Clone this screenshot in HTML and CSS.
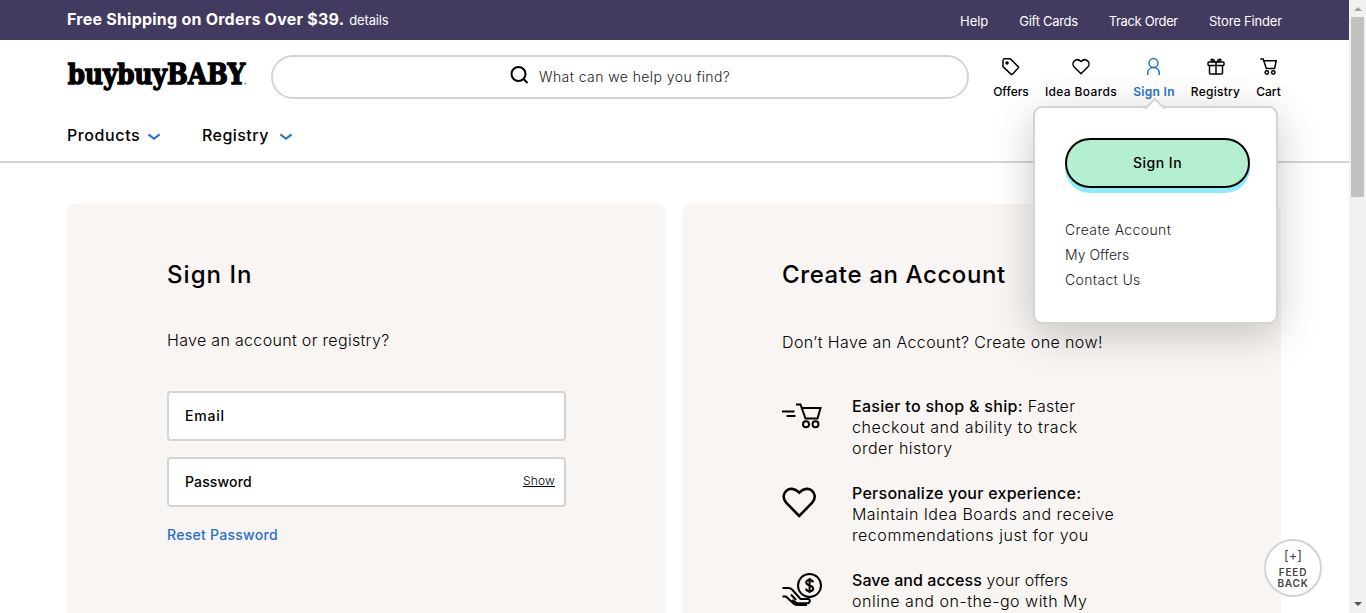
FILE: index.html
```html
<!DOCTYPE html>
<html lang="en">
<head>
<meta charset="utf-8">
<title>buybuy BABY - Sign In</title>
<link rel="stylesheet" href="styles.css">
</head>
<body>
<div class="page">
  <div class="topbar">
    <div class="promo"><strong>Free Shipping on Orders Over $39.</strong><a class="details">details</a></div>
    <nav class="toplinks"><a class="t-help">Help</a><a class="t-gift">Gift Cards</a><a class="t-track">Track Order</a><a class="t-store">Store Finder</a></nav>
  </div>
  <header class="header">
    <div class="header-row">
      <svg class="logo" width="184" height="44" viewBox="0 0 184 44"><text class="logo-text" x="1.7" y="29.200" textLength="177.500" lengthAdjust="spacingAndGlyphs">buybuyBABY</text><circle cx="179.400" cy="28.500" r="1" fill="#888"/></svg>
      <div class="search">
        <svg width="20" height="20" viewBox="0 0 20 20" fill="none" stroke="#000" stroke-width="2"><circle cx="8.500" cy="8" r="7"/><path d="M13.300 12.800l4.200 4.200"/></svg>
        <span class="search-text">What can we help you find?</span>
      </div>
      <nav class="tools">
        <a class="tool w-offers"><svg width="20" height="20" viewBox="0 0 20 20"><path d="M2.1 1.8h7.1l7.8 7.6q.9.9 0 1.8l-5.400 5.900q-.8.9-1.700 0L2 9.600V2.500"/><circle cx="6" cy="6" r="1" fill="#000"/></svg><span>Offers</span></a>
        <a class="tool w-ideas"><svg width="20" height="20" viewBox="0 0 20 20"><path d="M10 16.7L3 9.8C-.4 6 5.200-.3 10 4.500c4.800-4.800 10.400 1.500 7 5.300z"/></svg><span>Idea Boards</span></a>
        <a class="tool w-signin"><svg width="20" height="20" viewBox="0 0 20 20"><circle cx="9.500" cy="6.100" r="4.500"/><path d="M3.700 17.900v-1.500c0-7.800 11.600-7.800 11.600 0v1.500"/></svg><span>Sign In</span></a>
        <a class="tool w-registry"><svg width="20" height="20" viewBox="0 0 20 20"><rect x="2" y="5" width="16" height="3.500" rx="1"/><path d="M3.500 8.500v7.500q0 1 1 1h11q1 0 1-1V8.500M10 5v12M7.600 5C2.500 3.300 6.500-.2 9 4.800M12.400 5c5.100-1.700 1.100-5.200-1.400-.2"/></svg><span>Registry</span></a>
        <a class="tool w-cart"><svg width="20" height="20" viewBox="0 0 20 20"><path d="M1.200 1.900h3l3.100 9.500h8.300l1.600-7.600H4.900"/><circle cx="7.800" cy="15.500" r="1.700"/><circle cx="14.300" cy="15.500" r="1.700"/></svg><span>Cart</span></a>
      </nav>
    </div>
    <nav class="mainnav">
      <a class="m-products">Products</a><svg class="chev" width="14" height="8" viewBox="0 0 14 8"><path d="M1.400 1.400L7 5.800l5.600-4.400"/></svg>
      <a class="m-registry">Registry</a><svg class="chev" width="14" height="8" viewBox="0 0 14 8"><path d="M1.400 1.400L7 5.800l5.600-4.400"/></svg>
    </nav>
  </header>
  <main class="panels">
    <section class="panel">
      <h1 class="h-sign">Sign In</h1>
      <p class="lead lead-sign">Have an account or registry?</p>
      <div class="field field-email"><span class="f-email">Email</span></div>
      <div class="field"><span class="f-pass">Password</span><a class="show">Show</a></div>
      <a class="reset">Reset Password</a>
    </section>
    <section class="panel">
      <h1 class="h-create">Create an Account</h1>
      <p class="lead lead-create">Don’t Have an Account? Create one now!</p>
      <div class="benefit">
        <svg width="42" height="36" viewBox="0 0 42 36"><path d="M0 15.500h12.500M4.500 20h9M14 8.500h4.500l5 14h12l3-10.500H20"/><circle cx="24" cy="28.300" r="3"/><circle cx="33.500" cy="28.300" r="3"/></svg>
        <p><span class="b1a"><b>Easier to shop &amp; ship:</b> Faster</span><br><span class="b1b">checkout and ability to track</span><br><span class="b1c">order history</span></p>
      </div>
      <div class="benefit">
        <svg width="42" height="36" viewBox="0 0 42 36"><path stroke-width="2.600" d="M17.200 33L4.200 19.700C-3.500 10.500 8 .200 17.200 9.600c9.200-9.400 20.700.9 13 10.100z"/></svg>
        <p><span class="b2a"><b>Personalize your experience:</b></span><br><span class="b2b">Maintain Idea Boards and receive</span><br><span class="b2c">recommendations just for you</span></p>
      </div>
      <div class="benefit">
        <svg width="42" height="42" viewBox="0 0 42 42"><circle cx="27.500" cy="15.500" r="11.500"/><path d="M31 12.300c-.5-3-6.800-3.300-6.800.2 0 3.600 7 2.300 7 6s-6.800 3.600-7.200.2M27.600 8v15M.5 18h6q2 0 3.500 1.500l8.500 9.500h7.500q2 .3 1.800 2.200-.2 1.900-2.300 2H15l-5-3M.5 26.500h3.500l7.500 7q1.500 1.500 4 1.500H25M9 24.500l5 5.500"/></svg>
        <p><span class="b3a"><b>Save and access</b> your offers</span><br><span class="b3b">online and on-the-go with My</span></p>
      </div>
    </section>
  </main>
  <div class="popover">
    <svg class="arrow" width="22" height="12" viewBox="0 0 22 12"><path d="M1 12l10-10 10 10" fill="#fff" stroke="#d3d4d5" stroke-width="2"/></svg>
    <a class="pop-btn">Sign In</a>
    <a class="p1">Create Account</a><a class="p2">My Offers</a><a class="p3">Contact Us</a>
  </div>
  <div class="feedback"><span class="plus">[+]</span><span>FEED</span><span>BACK</span></div>
</div>
<div class="scrollbar"><i class="up"></i><i class="thumb"></i><i class="down"></i></div>
</body>
</html>
```

FILE: styles.css
```css
* { box-sizing: border-box; }
body { margin: 0; height: 613px; overflow: hidden; display: flex; background: #fff; color: #000; font-family: Inter, "Open Sans", sans-serif; }
.page { position: relative; width: 1349px; height: 613px; overflow: hidden; }
a, span, p, h1 { white-space: nowrap; }
p, h1 { margin: 0; }
svg { flex: none; display: block; }

.topbar { height: 40px; padding: 0 67px; background: #423a5f; color: #fff; display: flex; justify-content: space-between; }
.promo { display: flex; align-items: baseline; line-height: 39px; }
.promo strong { font-size: 16px; font-weight: 700; letter-spacing: 0.23px; }
.details { font-size: 13px; font-weight: 400; margin-left: 5px; letter-spacing: -.15px; }
.toplinks { display: flex; gap: 31px; font-size: 13px; line-height: 43px; }
.t-gift { letter-spacing: -.3px; } .t-track { letter-spacing: -.36px; } .t-store { letter-spacing: -.17px; }

.header { height: 123px; border-bottom: 2px solid #d3d4d5; }
.header-row { display: flex; height: 75px; padding: 15px 0 0 66px; }
.logo { overflow: visible; }
.logo-text { font: bold 27.500px "DejaVu Serif", serif; stroke: #000; stroke-width: 1.400px; }
.search { margin-left: 21px; width: 698px; height: 44px; border: 2px solid #d3d4d5; border-radius: 22px; display: flex; align-items: center; padding-left: 237px; gap: 9px; }
.search svg { margin-top: -3px; }
.search-text { font-size: 14px; font-weight: 300; color: #222; letter-spacing: .42px; margin-top: -2px; }
.tools { display: flex; gap: 16px; margin-left: 24px; font-size: 12px; font-weight: 500; }
.tool { display: flex; flex-direction: column; align-items: center; padding-top: 2px; }
.tool svg { fill: none; stroke: #000; stroke-width: 1.500; }
.tool span { margin-top: 7px; line-height: 15px; }
.w-offers { width: 36px; } .w-ideas { width: 72px; letter-spacing: .36px; } .w-signin { width: 42px; color: #266fd2; font-weight: 600; letter-spacing: .3px; } .w-registry { width: 49px; letter-spacing: .25px; } .w-cart { width: 25px; }
.tool.w-signin svg { stroke: #266fd2; }
.mainnav { display: flex; align-items: center; padding: 10px 0 0 67px; font-size: 16px; font-weight: 500; line-height: 20px; }
.m-products { width: 80px; letter-spacing: .6px; } .m-registry { width: 77px; margin-left: 41px; letter-spacing: .45px; }
.chev { fill: none; stroke: #266fd2; stroke-width: 2; margin-top: 3px; }

.panels { display: flex; gap: 16px; padding: 41px 68px 0 67px; }
.panel { width: 599px; height: 450px; padding: 55px 100px 0; background: #f9f5f2; border-radius: 8px 8px 0 0; display: flex; flex-direction: column; align-items: flex-start; }
h1 { font-size: 24px; line-height: 32px; font-weight: 500; }
.h-sign { letter-spacing: 1.05px; } .h-create { letter-spacing: .62px; }
.lead { font-size: 16px; line-height: 20px; font-weight: 300; }
.lead-sign { margin-top: 39px; letter-spacing: .32px; }
.lead-create { margin-top: 41px; letter-spacing: .4px; }
.field { width: 399px; height: 50px; margin-bottom: 16px; padding: 0 9px 2px 16px; display: flex; align-items: center; justify-content: space-between; border: 2px solid #d3d4d5; border-radius: 4px; background: #fff; font-size: 14px; font-weight: 500; }
.field-email { margin-top: 41px; }
.f-email { letter-spacing: .8px; } .f-pass { letter-spacing: .15px; }
.show { font-size: 12px; font-weight: 300; text-decoration: underline; margin-top: -2px; letter-spacing: .2px; }
.reset { color: #266fd2; font-size: 14px; font-weight: 500; line-height: 20px; margin-top: 2px; letter-spacing: .28px; }
.benefit { display: flex; gap: 28px; margin-bottom: 24px; font-size: 16px; line-height: 21px; font-weight: 300; }
.benefit b { font-weight: 500; }
.benefit svg { fill: none; stroke: #000; stroke-width: 2; }
.lead-create + .benefit { margin-top: 44px; }
.b1a { letter-spacing: .3px; } .b1b { letter-spacing: .59px; } .b1c { letter-spacing: .46px; }
.b2a { letter-spacing: .26px; } .b2b { letter-spacing: .45px; } .b2c { letter-spacing: .55px; }
.b3a { letter-spacing: .08px; } .b3b { letter-spacing: .51px; }

.popover { position: absolute; left: 1033px; top: 106px; width: 245px; height: 218px; padding: 30px 26px 0 30px; border: 2px solid #d3d4d5; border-radius: 9px; background: #fff; box-shadow: 0 10px 40px rgba(0,0,0,.22); display: flex; flex-direction: column; align-items: flex-start; font-size: 14px; line-height: 25px; font-weight: 300; color: #222; }
.arrow { position: absolute; left: 109px; top: -11px; }
.pop-btn { width: 185px; height: 50px; border: 2px solid #000; border-radius: 25px; background: #b5efd2; box-shadow: 0 5px #8eebff; color: #000; font-weight: 500; line-height: 46px; text-align: center; margin-bottom: 29px; letter-spacing: .5px; }
.p1 { letter-spacing: .37px; } .p3 { letter-spacing: .35px; }
.feedback { position: absolute; left: 1264px; top: 539px; width: 58px; height: 58px; border: 2px solid #d3d4d5; border-radius: 50%; background: #fff; color: #444; display: flex; flex-direction: column; align-items: center; font-size: 10px; line-height: 10.500px; font-weight: 600; letter-spacing: .8px; }
.feedback .plus { font-size: 13px; line-height: 16px; font-weight: 400; margin: 6px 0 4px; letter-spacing: 0; }

.scrollbar { width: 17px; height: 613px; background: #f1f1f1; display: flex; flex-direction: column; align-items: center; }
.up { border: 4px solid transparent; border-top: 0; border-bottom: 4px solid #a3a3a3; margin-top: 7px; }
.thumb { width: 13px; height: 180px; margin-top: 6px; background: #c1c1c1; }
.down { border: 4px solid transparent; border-bottom: 0; border-top: 4px solid #505050; margin-top: auto; margin-bottom: 7px; }
```
